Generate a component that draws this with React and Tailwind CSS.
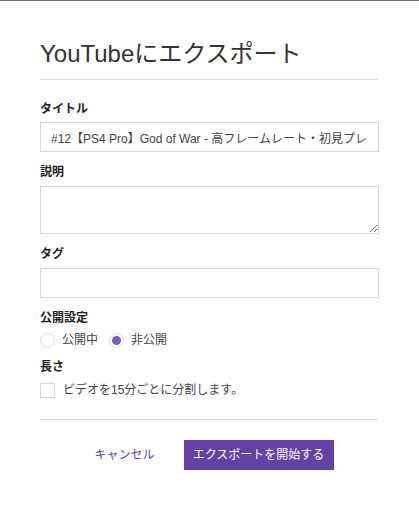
import React, { useState } from "react";

export default function App() {
  const [privacy, setPrivacy] = useState("private");
  const [split, setSplit] = useState(false);

  const font = { fontFamily: '"Liberation Sans", "Noto Sans CJK JP", sans-serif' };

  return (
    <div className="min-h-screen bg-white border-t border-[#6e6e6e] px-[40px] pt-[38px] text-[#333]" style={font}>
      <h1 className="h-[30px] text-[24px] leading-[30px] font-normal text-[#333] whitespace-nowrap">
        YouTubeにエクスポート
      </h1>
      <hr className="mt-[10px] border-0 border-t border-[#dcdcdc]" />

      {/* Title */}
      <label className="block mt-[21px] mb-[5px] text-[12px] leading-[16px] font-bold text-[#222]">タイトル</label>
      <input
        className="block w-full h-[30px] border border-[#d6d6d6] px-[10px] text-[12px] text-[#444] outline-none"
        defaultValue="#12【PS4 Pro】God of War - 高フレームレート・初見プレイ"
      />

      {/* Description */}
      <label className="block mt-[12px] mb-[6px] text-[12px] leading-[16px] font-bold text-[#222]">説明</label>
      <textarea className="block w-full h-[48px] border border-[#d6d6d6] px-[10px] py-[6px] text-[12px] outline-none" />

      {/* Tags */}
      <label className="block mt-[12px] mb-[6px] text-[12px] leading-[16px] font-bold text-[#222]">タグ</label>
      <input className="block w-full h-[30px] border border-[#d6d6d6] px-[10px] text-[12px] outline-none" />

      {/* Privacy */}
      <div className="mt-[12px] text-[12px] leading-[16px] font-bold text-[#222]">公開設定</div>
      <div className="mt-[4px] h-[20px] flex items-center text-[12px] text-[#444]">
        <button className="flex items-center" onClick={() => setPrivacy("public")}>
          <span className="w-[15px] h-[15px] rounded-full border border-[#d9d9d9] flex items-center justify-center">
            {privacy === "public" && <span className="w-[9px] h-[9px] rounded-full bg-[#7d5bc6]" />}
          </span>
          <span className="ml-[7px]">公開中</span>
        </button>
        <button className="flex items-center ml-[11px]" onClick={() => setPrivacy("private")}>
          <span className="w-[15px] h-[15px] rounded-full border border-[#d9d9d9] flex items-center justify-center">
            {privacy === "private" && <span className="w-[9px] h-[9px] rounded-full bg-[#7d5bc6]" />}
          </span>
          <span className="ml-[7px]">非公開</span>
        </button>
      </div>

      {/* Length */}
      <div className="mt-[9px] text-[12px] leading-[16px] font-bold text-[#222]">長さ</div>
      <button className="mt-[6px] flex items-center text-[12px] text-[#444]" onClick={() => setSplit(!split)}>
        <span className="w-[15px] h-[15px] border border-[#d6d6d6] flex items-center justify-center text-[11px] text-[#6441a5]">
          {split ? "✓" : ""}
        </span>
        <span className="ml-[8px]">ビデオを15分ごとに分割します。</span>
      </button>

      <hr className="mt-[20px] border-0 border-t border-[#dcdcdc]" />

      <div className="mt-[20px] flex justify-center gap-[20px]">
        <button className="w-[78px] h-[30px] text-[12px] text-[#6441a5]">キャンセル</button>
        <button className="w-[150px] h-[30px] bg-[#6441a5] text-[12px] text-white">エクスポートを開始する</button>
      </div>
    </div>
  );
}
